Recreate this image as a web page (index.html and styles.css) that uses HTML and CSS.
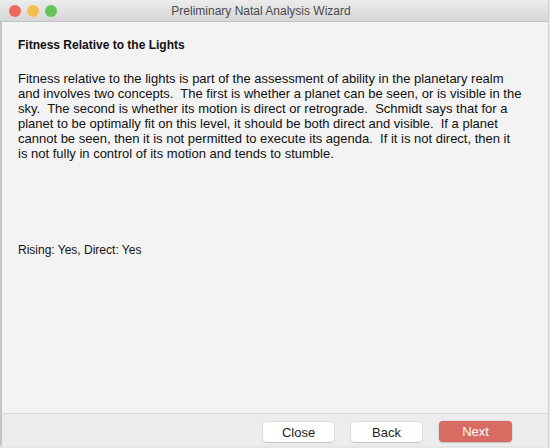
FILE: index.html
```html
<!DOCTYPE html>
<html lang="en">
<head>
  <meta charset="UTF-8">
  <meta name="viewport" content="width=device-width, initial-scale=1.0">
  <title>Preliminary Natal Analysis Wizard</title>
  <link rel="stylesheet" href="styles.css">
</head>
<body>
  <div class="window">
    <div class="titlebar">
      <div class="lights">
        <span class="light red"></span>
        <span class="light yellow"></span>
        <span class="light green"></span>
      </div>
      <div class="title">Preliminary Natal Analysis Wizard</div>
    </div>

    <div class="content">
      <h1>Fitness Relative to the Lights</h1>
      <p class="text">
        Fitness relative to the lights is part of the assessment of ability in the planetary realm<br>
        and involves two concepts.&nbsp; The first is whether a planet can be seen, or is visible in the<br>
        sky.&nbsp; The second is whether its motion is direct or retrograde.&nbsp; Schmidt says that for a<br>
        planet to be optimally fit on this level, it should be both direct and visible.&nbsp; If a planet<br>
        cannot be seen, then it is not permitted to execute its agenda.&nbsp; If it is not direct, then it<br>
        is not fully in control of its motion and tends to stumble.
      </p>
      <p class="status">Rising: Yes, Direct: Yes</p>
    </div>

    <div class="footer">
      <button class="btn">Close</button>
      <button class="btn">Back</button>
      <button class="btn primary">Next</button>
    </div>
  </div>
</body>
</html>
```

FILE: styles.css
```css
body {
  margin: 0;
  width: 550px;
  height: 448px;
  background-color: #e6e6e6;
  font-family: "Liberation Sans", Arial, sans-serif;
  overflow: hidden;
}
.window {
  width: 548px;
  height: 446px;
  display: flex;
  flex-direction: column;
  border-right: 1px solid #d2d2d2;
  background-color: #ececec;
}
.titlebar {
  height: 21px;
  display: grid;
  align-items: center;
  background: linear-gradient(#ececec, #d6d6d6);
  border-bottom: 1px solid #c3c3c3;
}
.lights, .title {
  grid-area: 1 / 1;
}
.lights {
  display: flex;
  gap: 6px;
  padding-left: 9px;
  justify-self: start;
}
.light {
  width: 12px;
  height: 12px;
  border-radius: 50%;
}
.red { background-color: #ee6a5e; }
.yellow { background-color: #f6be4f; }
.green { background-color: #62c454; }
.title {
  justify-self: center;
  padding-right: 26px;
  font-size: 12px;
  color: #4a4a4a;
}
.content {
  flex: 1;
  padding: 16px 16px 0;
  background-color: #f3f3f3;
  border-left: 2px solid #c4c4c4;
  font-size: 12px;
  line-height: 15px;
  color: #111;
}
.content h1 {
  margin: 0;
  font-size: 12px;
  font-weight: bold;
}
.text {
  margin: 18px 0 0;
  font-size: 13px;
}
.status {
  margin: 82px 0 0;
}
.footer {
  height: 33px;
  display: flex;
  justify-content: flex-end;
  align-items: flex-start;
  gap: 17px;
  padding: 8px 36px 0 0;
  box-sizing: border-box;
  border-top: 1px solid #dadada;
  border-left: 2px solid #c4c4c4;
  background-color: #ececec;
}
.btn {
  width: 71px;
  height: 20px;
  padding: 0;
  border: none;
  border-radius: 4px;
  background-color: #fff;
  box-shadow: 0 0 0 0.5px rgba(0, 0, 0, 0.12), 0 1px 1px rgba(0, 0, 0, 0.12);
  font-family: "Liberation Sans", Arial, sans-serif;
  font-size: 13px;
  color: #1e1e1e;
}
.btn.primary {
  width: 73px;
  height: 21px;
  margin-top: -1px;
  background-color: #d86b62;
  color: #fff;
}
```
